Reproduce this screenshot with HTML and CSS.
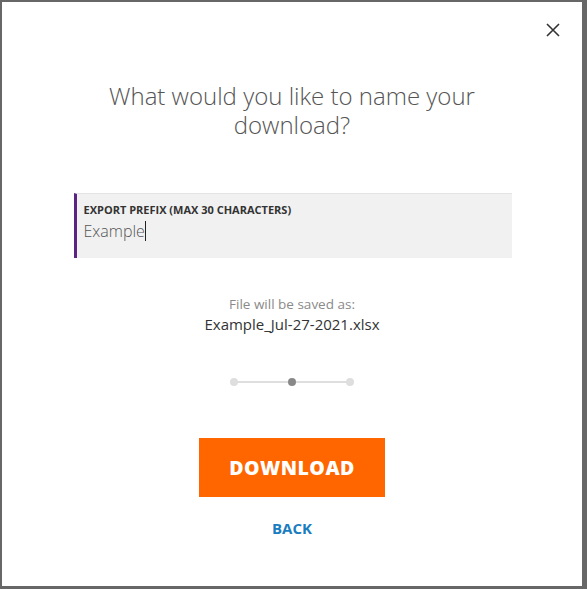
FILE: index.html
```html
<!DOCTYPE html>
<html lang="en">
<head>
    <meta charset="UTF-8">
    <meta name="viewport" content="width=device-width, initial-scale=1.0">
    <title>Export</title>
    <link rel="stylesheet" href="styles.css">
</head>
<body>
    <div class="modal">
        <button class="close-button" aria-label="Close">
            <svg width="14" height="14" viewBox="0 0 14 14">
                <path d="M1 1 L13 13 M13 1 L1 13" stroke="#333" stroke-width="1.6" fill="none"/>
            </svg>
        </button>

        <h2 class="modal-title">What would you like to name your download?</h2>

        <div class="prefix-field">
            <label class="prefix-label" for="prefix-input">EXPORT PREFIX (MAX 30 CHARACTERS)</label>
            <div class="prefix-value"><span id="prefix-input">Example</span><span class="caret"></span></div>
        </div>

        <div class="saved-as">
            <p class="saved-as-label">File will be saved as:</p>
            <p class="saved-as-name">Example_Jul-27-2021.xlsx</p>
        </div>

        <div class="stepper">
            <span class="step"></span>
            <span class="step-line"></span>
            <span class="step active"></span>
            <span class="step-line"></span>
            <span class="step"></span>
        </div>

        <button class="download-button">DOWNLOAD</button>
        <a class="back-link" href="#">BACK</a>
    </div>
</body>
</html>
```

FILE: styles.css
```css
body, html {
    margin: 0;
    padding: 0;
    height: 100%;
    background-color: #676767;
    font-family: "Open Sans", "Liberation Sans", sans-serif;
}

.modal {
    position: relative;
    margin: 2px 5px 0 2px;
    width: 580px;
    height: 584px;
    background-color: white;
    display: flex;
    flex-direction: column;
    align-items: center;
}

.close-button {
    position: absolute;
    top: 21px;
    right: 22px;
    padding: 0;
    border: none;
    background: transparent;
    cursor: pointer;
    line-height: 0;
}

.modal-title {
    margin: 79px 0 0;
    width: 380px;
    font-size: 24px;
    font-weight: 300;
    line-height: 29px;
    color: #555;
    text-align: center;
}

.prefix-field {
    margin: 54px 0 0 1px;
    width: 438px;
    height: 65px;
    box-sizing: border-box;
    padding: 8px 10px 0 7px;
    border-left: 3px solid #5b2483;
    border-top: 1px solid #e4e4e4;
    background-color: #f1f1f1;
}

.prefix-label {
    display: block;
    font-size: 11px;
    font-weight: 700;
    line-height: 15px;
    color: #333;
}

.prefix-value {
    margin-top: 3px;
    font-size: 16px;
    font-weight: 300;
    line-height: 22px;
    color: #555;
    display: flex;
    align-items: center;
}

.caret {
    width: 1px;
    height: 20px;
    background-color: #222;
}

.saved-as {
    margin-top: 36px;
    text-align: center;
    line-height: 20px;
}

.saved-as p {
    margin: 0;
}

.saved-as-label {
    font-size: 13.5px;
    color: #8a8a8a;
}

.saved-as-name {
    font-size: 15px;
    color: #333;
}

.stepper {
    margin-top: 44px;
    display: flex;
    align-items: center;
}

.step {
    width: 8px;
    height: 8px;
    border-radius: 50%;
    background-color: #dedede;
}

.step.active {
    background-color: #888;
}

.step-line {
    width: 50px;
    height: 2px;
    background-color: #dedede;
}

.download-button {
    margin-top: 52px;
    width: 186px;
    height: 59px;
    border: none;
    background-color: #ff6600;
    color: white;
    font-family: "Open Sans", "Liberation Sans", sans-serif;
    font-size: 19.5px;
    font-weight: 800;
    letter-spacing: 0.5px;
    cursor: pointer;
}

.back-link {
    margin-top: 21px;
    font-size: 15px;
    font-weight: 700;
    line-height: 20px;
    color: #1a7dbf;
    text-decoration: none;
}
```
